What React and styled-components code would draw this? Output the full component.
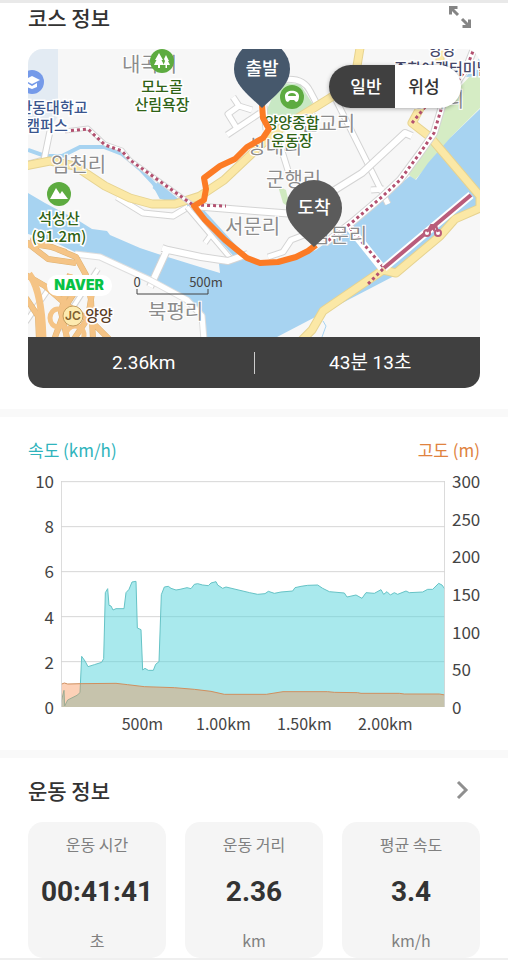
import React, { useState } from 'react'
import styled, { createGlobalStyle } from 'styled-components'

const stats = [
    { title: "운동 시간", value: "00:41:41", unit: "초" },
    { title: "운동 거리", value: "2.36", unit: "km" },
    { title: "평균 속도", value: "3.4", unit: "km/h" },
]

const speedTicks = [10, 8, 6, 4, 2, 0]
const elevationTicks = [300, 250, 200, 150, 100, 50, 0]
const distanceTicks = ["500m", "1.00km", "1.50km", "2.00km"]

// x: 0 - 1152 (distance), y: 0 - 678 (top to bottom)
const speedLine = "0,665 9,628 11,675 20,657 48,643 57,635 62,526 72,540 81,557 100,551 122,544 128,533 133,335 140,323 144,373 150,375 156,387 165,383 189,383 195,335 204,325 213,303 225,301 229,441 240,446 245,567 252,562 262,568 277,568 284,550 294,542 301,341 310,318 322,316 330,322 345,327 357,325 378,320 390,323 400,310 410,308 425,312 442,314 450,306 465,302 470,312 485,322 495,318 566,335 590,340 612,338 622,331 640,337 660,333 695,330 702,320 720,316 740,313 770,312 785,322 805,332 850,336 858,348 885,342 903,352 915,335 940,337 960,326 968,340 978,332 988,342 1000,335 1010,340 1035,330 1045,335 1085,333 1100,325 1115,325 1133,307 1143,312 1152,325"
const elevationLine = "0,610 10,606 20,609 60,608 165,607 200,611 250,617 340,620 400,625 450,631 490,640 616,640 666,632 800,632 820,634 890,635 900,637 1015,637 1030,639 1135,639 1152,642"

function App() {
    const [mapType, setMapType] = useState("normal");

    return (
        <Page>
            <GlobalStyle />
            <TopLine />
            <CourseSection>
                <CourseHeader>
                    <Title>코스 정보</Title>
                    <IconButton type="button" aria-label="지도 확대">
                        <svg width="24" height="24" viewBox="0 0 24 24" fill="none" stroke="#858585" strokeWidth="3">
                            <path d="M9.500 2.500H2.500V9.500M3 3l7 7M21.500 14.500v7h-7M21 21l-7-7" />
                        </svg>
                    </IconButton>
                </CourseHeader>
                <MapCard>
                    <MapBox>
                        <CourseMap />
                        <Toggle>
                            <ToggleButton type="button" $active={mapType === "normal"} onClick={() => setMapType("normal")}>일반</ToggleButton>
                            <ToggleButton type="button" $active={mapType === "satellite"} onClick={() => setMapType("satellite")}>위성</ToggleButton>
                        </Toggle>
                    </MapBox>
                    <Summary>
                        <span>2.36km</span>
                        <span>43분 13초</span>
                    </Summary>
                </MapCard>
            </CourseSection>
            <Band />
            <ChartSection>
                <Legend>
                    <LegendText $color="#30b4bc">속도 (km/h)</LegendText>
                    <LegendText $color="#e0833f">고도 (m)</LegendText>
                </Legend>
                <ChartGrid>
                    <Axis $align="right">
                        {speedTicks.map(tick => <span key={tick}>{tick}</span>)}
                    </Axis>
                    <Plot viewBox="0 0 1152 678" preserveAspectRatio="none">
                        {[2, 137, 272, 407, 542].map(y => (
                            <line key={y} x1="0" x2="1152" y1={y} y2={y} stroke="#d6d6d6" />
                        ))}
                        <polygon points={`0,678 ${speedLine} 1152,678`} fill="rgba(83, 211, 220, 0.5)" />
                        <polyline points={speedLine} fill="none" stroke="#66c3c6" />
                        <polygon points={`0,678 ${elevationLine} 1152,678`} fill="rgba(246, 133, 66, 0.38)" />
                        <polyline points={elevationLine} fill="none" stroke="#d08f5e" />
                        <path d="M1 0V678M1151 0V678" stroke="#d5d5d5" />
                    </Plot>
                    <Axis $align="left">
                        {elevationTicks.map(tick => <span key={tick}>{tick}</span>)}
                    </Axis>
                    <Distances>
                        {distanceTicks.map(tick => <span key={tick}>{tick}</span>)}
                    </Distances>
                </ChartGrid>
            </ChartSection>
            <Band />
            <InfoSection>
                <InfoHeader>
                    <Title>운동 정보</Title>
                    <IconButton type="button" aria-label="운동 정보 더보기">
                        <svg width="24" height="24" viewBox="0 0 24 24" fill="none" stroke="#8f8f8f" strokeWidth="3">
                            <path d="M2 4l8 8-8 8" />
                        </svg>
                    </IconButton>
                </InfoHeader>
                <Cards>
                    {stats.map(stat => (
                        <Card key={stat.title}>
                            <CardLabel>{stat.title}</CardLabel>
                            <CardValue>{stat.value}</CardValue>
                            <CardLabel>{stat.unit}</CardLabel>
                        </Card>
                    ))}
                </Cards>
            </InfoSection>
            <BottomLine />
        </Page>
    )
}

export default App

function Road({ d, width = 5, color = "#fff", edge = "#d4d4d4" }) {
    return (
        <>
            <path d={d} stroke={edge} strokeWidth={width + 2} />
            <path d={d} stroke={color} strokeWidth={width} />
        </>
    )
}

function Pin({ x, y, color, label }) {
    return (
        <g transform={`translate(${x} ${y})`}>
            <path d="M-28 0A28 28 0 0 1 28 0C28 11 21 19 14 26L0 39L-14 26C-21 19-28 11-28 0Z" fill={color} />
            <PinText y="6">{label}</PinText>
        </g>
    )
}

function CourseMap() {
    return (
        <MapSvg viewBox="28 49 452 288" preserveAspectRatio="xMidYMid slice" role="img" aria-label="코스 지도">
            <rect x="28" y="49" width="452" height="288" fill="#f7f7f7" />
            <path d="M28 49H58V112Q58 124 46 124H28Z" fill="#e3ebf3" />

            {/* green areas */}
            <path d="M264 116L279 83L300 84L314 106L268 134Z" fill="#c8e8c4" />
            <path d="M278 186L286 190L290 208L283 203Z" fill="#cfe9bf" />
            <path d="M471 75L448 100L438 125L408 174L415 180L428 165L452 136L480 108V76Z" fill="#d5ecc4" />

            {/* river */}
            <path d="M28 193L45 203L60 211L76 219L92 229L107 231L110 235L140 248L158 254L200 267L220 273L219 264L233 260L248 259L280 262L316 250L350 225L382 199L410 176L416 180L428 163L450 138L480 109V337H207L201 318L187 302L150 283L110 263L77 253L50 240L28 234Z" fill="#a7d3f1" />
            <path d="M466 77L480 57V76Z" fill="#a7d3f1" />
            <path d="M480 207L455 222L396 275L323 313L277 337H480Z" fill="#f7f7f7" />
            <g fill="none" stroke="#a7d3f1">
                <path d="M28 150L45 156H62L80 147H104L122 154L140 169L154 184L161 197L190 205" strokeWidth="4" />
                <path d="M155 185L176 202" strokeWidth="8" />
                <path d="M196 208L245 262" strokeWidth="9" />
                <path d="M323 321L326 326L322 337" strokeWidth="1" />
            </g>

            <g fill="none" strokeLinejoin="round">
                <Road d="M50 131L44 160L28 164" />
                <Road d="M117 197L143 213L173 216L188 207" />
                <Road d="M187 207L232 260M205 243L210 236" width={4} />
                <path d="M187 251L219 264L218 270L190 262Z" fill="#f7f7f7" />
                <Road d="M162 248L168 250L201 257L228 261L248 254M167 250L150 287" width={6} />
                <Road d="M75 254L100 257L150 280L187 300L202 316L204 340" width={5} edge="#dedede" />
                <Road d="M192 206L255 211L295 214" width={6} />
                <Road d="M233 97L239 106L228 114L236 127M239 106L252 110M227 135L260 113M266 130L264 106" />
                <Road d="M280 80Q303 76 310 91L319 108" />
                <Road d="M281 148L291 180" />
                <Road d="M268 257L283 252L291 240L320 229" />
                <Road d="M336 100L370 168L388 204M371 190L384 189" />
                <Road d="M330 193L362 173L405 133L412 136" width={6} />
                <Road d="M98 269L58 330M48 290L26 322" width={4} />

                <Road d="M25 166L50 161L75 166L105 186L130 198L152 204H175L200 196L224 180L262 144L280 129L330 98L348 86L356 72L360 48" width={7} color="#fbe8a6" edge="#e6d391" />
                <Road d="M440 48V66L424 101L412 123L430 137L480 196V208L455 219L440 236L396 273L383 270L323 311L312 330L300 342" width={7} color="#fbe8a6" edge="#e6d391" />

                <Road d="M65 131L88 128L105 144L122 150L130 160L193 205" width={3} />
                <Road d="M475 46L466 69L443 103L434 133L420 153L400 180L383 196L350 224L325 243" width={6} />
                <Road d="M350 228L382 268" width={6} edge="#fff" />
                <g stroke="#b35170" strokeWidth="3" strokeDasharray="3 3">
                    <path d="M65 131L88 129L105 145L122 151L130 160L193 205L226 206" />
                    <path d="M475 46L466 69L443 103L434 133L420 153L400 180L383 196L350 224L325 243" />
                    <path d="M412 123L430 101M350 228L384 268L368 284" />
                </g>
                <path d="M384 268L471 195" stroke="#fff" strokeWidth="8" />
                <path d="M384 268L471 195" stroke="#b95c7b" strokeWidth="4" />

                {/* interchange */}
                <g stroke="#ddb172" strokeWidth="6">
                    <path d="M26 243L52 247L76 257L86 275L91 300L93 340M26 242L48 259L76 263M26 275L45 286L68 306L92 322L112 342M26 298L38 316L39 340M30 240L66 252M84 278L67 304L54 340M70 274L61 312L68 342M94 280L88 318L72 342" />
                </g>
                <g stroke="#f5c486" strokeWidth="5">
                    <path d="M26 243L52 247L76 257L86 275L91 300L93 340M26 242L48 259L76 263M26 275L45 286L68 306L92 322L112 342M26 298L38 316L39 340M30 240L66 252M84 278L67 304L54 340M70 274L61 312L68 342M94 280L88 318L72 342" />
                    <path d="M29 274Q42 290 43 340" strokeWidth="7" />
                    <ellipse cx="58" cy="318" rx="8" ry="9" />
                    <ellipse cx="75" cy="335" rx="9" ry="9" />
                </g>
            </g>

            <g fill="none" stroke="#b95c7b" strokeWidth="2">
                <circle cx="427" cy="233" r="3" fill="#fff" />
                <circle cx="438" cy="233" r="3" fill="#fff" />
                <path d="M427 232L431 225H436L438 232M431 225L434 230L436 223" />
            </g>

            <PlaceText x="122" y="72">내곡리</PlaceText>
            <PlaceText x="51" y="172">임천리</PlaceText>
            <PlaceText x="300" y="131">연교리</PlaceText>
            <PlaceText x="247" y="154">성내리</PlaceText>
            <PlaceText x="266" y="187">군행리</PlaceText>
            <PlaceText x="225" y="234">서문리</PlaceText>
            <PlaceText x="312" y="243">남문리</PlaceText>
            <PlaceText x="148" y="319">북평리</PlaceText>
            <PlaceText x="409" y="107">청곡리</PlaceText>

            <SpotText x="162" y="92">모노골</SpotText>
            <SpotText x="162" y="110">산림욕장</SpotText>
            <SpotText x="59" y="224">석성산</SpotText>
            <SpotText x="59" y="242">(91.2m)</SpotText>
            <SpotText x="292" y="128">양양종합</SpotText>
            <SpotText x="292" y="146">운동장</SpotText>
            <SpotText x="53" y="113" $color="#3b568e">안동대학교</SpotText>
            <SpotText x="47" y="131" $color="#3b568e">캠퍼스</SpotText>
            <SpotText x="442" y="55" $color="#46486a">양양</SpotText>
            <SpotText x="442" y="74" $color="#46486a">종합여객터미널</SpotText>
            <SpotText x="99" y="321" $color="#5a3d25">양양</SpotText>

            <g fill="#5dab40">
                <circle cx="162" cy="61" r="12" />
                <circle cx="59" cy="194" r="12" />
                <circle cx="292" cy="97" r="12" />
            </g>
            <circle cx="32" cy="82" r="12" fill="#759ae9" />
            <g fill="#fff">
                <path d="M159 53L163 60H161.500L164 65H160V68H158V65H154L156.500 60H155Z" />
                <path d="M166 55L169 61H168L170 65H167V68H165.500V65H163.500L165 61L164 59Z" />
                <path d="M50 199L56 188L60 194L62 191L68 199Z" />
                <path d="M24 80L32 76L40 80L32 84ZM27 83L32 86L37 83V87L32 89L27 87Z" />
                <path d="M285 96C285 89 299 89 299 96C299 99 298 102 296 102L294 100H290L288 102C286 102 285 99 285 96Z" />
            </g>
            <path d="M288 96Q288 93 292 93T296 96Z" fill="#5dab40" />
            <circle cx="73" cy="316" r="10" fill="#fdebb0" stroke="#c49d5d" />
            <JcText x="73" y="320">JC</JcText>

            <path d="M262 104L263 118L269 129L263 138L247 147L235 159L220 166L204 178L206 189L204 200L194 206L205 220L225 240L247 258L260 263L278 262L296 257L308 251L316 245" fill="none" stroke="#fc7b25" strokeWidth="6" strokeLinejoin="round" />
            <Pin x={262} y={69} color="#46586c" label="출발" />
            <Pin x={314} y={208} color="#5b5b5b" label="도착" />

            <rect x="47" y="275" width="65" height="21" rx="10" fill="#fff" />
            <NaverText x="79" y="290">NAVER</NaverText>
            <path d="M137 289V294H208V289" fill="none" stroke="#454545" strokeWidth="1" />
            <ScaleText x="137" y="287">0</ScaleText>
            <ScaleText x="206" y="287">500m</ScaleText>
        </MapSvg>
    )
}

const GlobalStyle = createGlobalStyle`
    * {
        box-sizing: border-box;
    }
    body {
        margin: 0;
        background: #fff;
        color: #333;
        font-family: "Noto Sans CJK KR", "Noto Sans", sans-serif;
    }
    button {
        padding: 0;
        border: 0;
        font: inherit;
        cursor: pointer;
    }
`

const Page = styled.main`
    width: 100%;
`

const TopLine = styled.div`
    height: 3px;
    background: #e9e9e9;
`

const BottomLine = styled.div`
    height: 2px;
    background: #efefef;
`

const Band = styled.div`
    height: 8px;
    background: #f9f9f9;
`

const CourseSection = styled.section`
    padding: 0 28px 21px;
`

const CourseHeader = styled.div`
    display: flex;
    align-items: flex-start;
    justify-content: space-between;
    height: 46px;
    padding: 2px 8px 0 0;
`

const InfoHeader = styled.div`
    display: flex;
    align-items: center;
    justify-content: space-between;
    height: 64px;
`

const Title = styled.h2`
    margin: 0;
    font-size: 21px;
    line-height: 24px;
    font-weight: 500;
`

const IconButton = styled.button`
    display: flex;
    background: none;
`

const MapCard = styled.div`
    overflow: hidden;
    border-radius: 15px;
`

const MapBox = styled.div`
    position: relative;
    height: 288px;
`

const MapSvg = styled.svg`
    display: block;
    width: 100%;
    height: 100%;
`

const PlaceText = styled.text`
    font-size: 20px;
    fill: #8c8c8c;
    stroke: #fff;
    stroke-width: 2px;
    paint-order: stroke;
`

const SpotText = styled.text`
    font-size: 15px;
    font-weight: 500;
    text-anchor: middle;
    fill: ${props => props.$color || "#2f6316"};
    stroke: #fff;
    stroke-width: 3px;
    paint-order: stroke;
`

const ScaleText = styled.text`
    font-size: 13px;
    text-anchor: middle;
    fill: #454545;
`

const JcText = styled.text`
    font-family: Inter, sans-serif;
    font-size: 12px;
    font-weight: 600;
    text-anchor: middle;
    fill: #80602f;
`

const NaverText = styled.text`
    font-family: Inter, sans-serif;
    font-size: 14px;
    font-weight: 900;
    text-anchor: middle;
    fill: #08c245;
`

const PinText = styled.text`
    font-size: 18px;
    font-weight: 500;
    text-anchor: middle;
    fill: #fff;
`

const Toggle = styled.div`
    position: absolute;
    top: 16px;
    right: 19px;
    display: flex;
    width: 132px;
    height: 43px;
    overflow: hidden;
    border-radius: 22px;
    box-shadow: 0 1px 4px rgba(0, 0, 0, 0.3);
`

const ToggleButton = styled.button`
    flex: 1;
    padding: 0 8px 2px;
    text-align: center;
    font-size: 17px;
    font-weight: 500;
    color: ${props => props.$active ? "#fff" : "#333"};
    background: ${props => props.$active ? "#404040" : "#fff"};

    &:first-child {
        padding-right: 0;
    }
    &:last-child {
        padding-left: 0;
    }
`

const Summary = styled.div`
    display: flex;
    align-items: center;
    height: 51px;
    background: #404040;
    color: #fff;
    font-family: Roboto, "Noto Sans CJK KR", sans-serif;
    font-size: 19px;
    line-height: 22px;

    > span {
        flex: 1;
        padding-left: 6px;
        text-align: center;
    }
    > span + span {
        border-left: 1px solid #ccc;
    }
`

const ChartSection = styled.section`
    padding: 20px 28px 17px;
`

const Legend = styled.div`
    display: flex;
    justify-content: space-between;
    margin-bottom: 9px;
`

const LegendText = styled.span`
    font-size: 17px;
    line-height: 25px;
    color: ${props => props.$color};
`

const ChartGrid = styled.div`
    display: grid;
    grid-template-columns: 26px 1fr 28px;
    column-gap: 7px;
    color: #444;
    font-size: 17px;
    line-height: 20px;
`

const Axis = styled.div`
    display: flex;
    flex-direction: column;
    justify-content: space-between;
    height: 246px;
    text-align: ${props => props.$align};
`

const Plot = styled.svg`
    width: 100%;
    height: 226px;
    margin: 10px 0;

    > * {
        vector-effect: non-scaling-stroke;
    }
`

const Distances = styled.div`
    grid-column: 2;
    display: grid;
    grid-template-columns: repeat(4, 1fr);
    padding: 0 5% 0 41px;
    margin-top: -4px;
    font-size: 16px;
    text-align: center;
    white-space: nowrap;
`

const InfoSection = styled.section`
    padding: 0 28px;
`

const Cards = styled.div`
    display: grid;
    grid-template-columns: repeat(3, 1fr);
    gap: 19px;
`

const Card = styled.div`
    display: flex;
    flex-direction: column;
    align-items: center;
    justify-content: space-between;
    height: 136px;
    padding: 10px 0 6px;
    border-radius: 15px;
    background: #f5f5f5;
`

const CardLabel = styled.span`
    font-size: 16px;
    line-height: 24px;
    color: #808080;
`

const CardValue = styled.strong`
    font-family: Roboto, "Noto Sans CJK KR", sans-serif;
    font-size: 28px;
    line-height: 40px;
    font-weight: 700;
`
